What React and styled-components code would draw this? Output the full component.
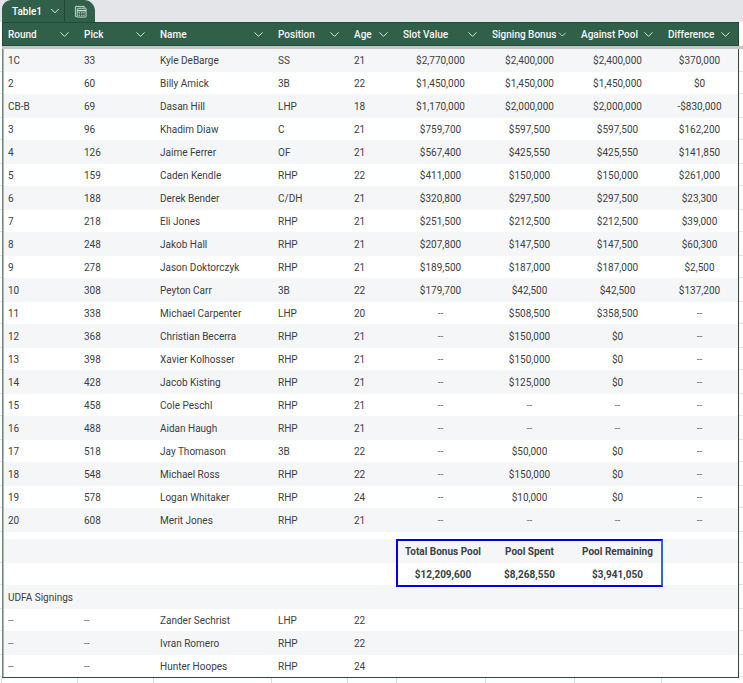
import React from "react";
import styled, { createGlobalStyle } from "styled-components";
import { ChevronDown } from "lucide-react";

const GlobalStyle = createGlobalStyle`
  html, body {
    margin: 0;
    padding: 0;
    background: #fff;
    font-family: Roboto, "Liberation Sans", sans-serif;
    -webkit-font-smoothing: antialiased;
  }
`;

const COLUMNS = "74px 76px 118px 76px 49px 89px 89px 87px 77px";

const Page = styled.div`
  width: 743px;
  height: 683px;
  overflow: hidden;
  background: #fff;
`;

const TabBar = styled.div`
  height: 22px;
  padding-left: 2px;
  background: #e4e5e9;
  display: flex;
  align-items: flex-end;
`;

const Tab = styled.div`
  width: 93px;
  height: 22px;
  background: #305f4a;
  border-radius: 9px 11px 0 0;
  display: flex;
  color: #fff;
`;

const TabName = styled.div`
  width: 63px;
  padding-left: 10px;
  box-sizing: border-box;
  display: flex;
  align-items: center;
  gap: 6px;
  font-size: 10px;
  font-weight: 500;
  border-right: 1px solid #1f4a38;
`;

const TabIcon = styled.div`
  flex: 1;
  display: flex;
  align-items: center;
  justify-content: center;
`;

const HeaderRow = styled.div`
  margin-left: 2px;
  width: 737px;
  height: 24px;
  box-sizing: border-box;
  display: grid;
  grid-template-columns: ${COLUMNS};
  background: #305f4a;
  border: 1px solid #214c3a;
  color: #f4f7f5;
`;

const HeaderCell = styled.div`
  display: flex;
  align-items: center;
  justify-content: space-between;
  padding: 0 5px 0 7px;
  font-size: 10px;
  font-weight: 500;
  white-space: nowrap;

  &:first-child {
    padding-left: 5px;
  }
`;

const GrayBand = styled.div`
  height: 3px;
  margin-left: 2px;
  background: #c5c6c6;
`;

const RowOuter = styled.div`
  padding: 0 4px 0 2px;
  background: linear-gradient(#dfe1e4, #dfe1e4) bottom / 100% 1px no-repeat;
`;

const RowInner = styled.div`
  height: ${(p) => p.$height}px;
  display: grid;
  grid-template-columns: ${COLUMNS};
  background: ${(p) => (p.$shaded ? "#f5f6f8" : "#fff")};
  border-left: 1px solid #6f8b7e;
  border-right: 1px solid #2c4a3f;
  box-shadow: inset 1px 0 0 #a9b8b1;
  color: #3c4043;
  font-size: 10px;
`;

const Cell = styled.div`
  display: flex;
  align-items: center;
  white-space: nowrap;
  justify-content: ${(p) => (p.$center ? "center" : "flex-start")};
  padding-left: ${(p) => p.$inset}px;
  font-weight: ${(p) => (p.$bold ? 700 : 400)};
  color: ${(p) => (p.$muted ? "#6b6f73" : "inherit")};
`;

const Spacer = styled.div`
  height: 7px;
  margin-left: 2px;
  width: 737px;
  box-sizing: border-box;
  background: #fff;
  border-left: 1px solid #6f8b7e;
  border-right: 1px solid #2c4a3f;
  box-shadow: inset 1px 0 0 #a9b8b1;
`;

const SummaryBlock = styled.div`
  position: relative;
`;

const SelectionBox = styled.div`
  position: absolute;
  left: 396px;
  top: 0;
  width: 267px;
  height: 48px;
  box-sizing: border-box;
  border: 2px solid #0000ee;
  border-right-color: #2f62f5;
  pointer-events: none;
`;

const BottomEdge = styled.div`
  margin-left: 2px;
  width: 737px;
  height: 1px;
  background: #2c4a3f;
`;

const Footer = styled.div`
  margin-left: 3px;
  height: 5px;
  display: grid;
  grid-template-columns: ${COLUMNS};
`;

const FooterCell = styled.div`
  position: relative;
  border-left: 1px solid #d9dbde;

  &:first-child {
    border-left: none;
  }

  &:first-child::before {
    content: "";
    position: absolute;
    left: -2px;
    top: 0;
    bottom: 0;
    width: 1px;
    background: #d9dbde;
  }
`;

const headers = [
  "Round",
  "Pick",
  "Name",
  "Position",
  "Age",
  "Slot Value",
  "Signing Bonus",
  "Against Pool",
  "Difference",
];

const rows = [
  ["1C", "33", "Kyle DeBarge", "SS", "21", "$2,770,000", "$2,400,000", "$2,400,000", "$370,000"],
  ["2", "60", "Billy Amick", "3B", "22", "$1,450,000", "$1,450,000", "$1,450,000", "$0"],
  ["CB-B", "69", "Dasan Hill", "LHP", "18", "$1,170,000", "$2,000,000", "$2,000,000", "-$830,000"],
  ["3", "96", "Khadim Diaw", "C", "21", "$759,700", "$597,500", "$597,500", "$162,200"],
  ["4", "126", "Jaime Ferrer", "OF", "21", "$567,400", "$425,550", "$425,550", "$141,850"],
  ["5", "159", "Caden Kendle", "RHP", "22", "$411,000", "$150,000", "$150,000", "$261,000"],
  ["6", "188", "Derek Bender", "C/DH", "21", "$320,800", "$297,500", "$297,500", "$23,300"],
  ["7", "218", "Eli Jones", "RHP", "21", "$251,500", "$212,500", "$212,500", "$39,000"],
  ["8", "248", "Jakob Hall", "RHP", "21", "$207,800", "$147,500", "$147,500", "$60,300"],
  ["9", "278", "Jason Doktorczyk", "RHP", "21", "$189,500", "$187,000", "$187,000", "$2,500"],
  ["10", "308", "Peyton Carr", "3B", "22", "$179,700", "$42,500", "$42,500", "$137,200"],
  ["11", "338", "Michael Carpenter", "LHP", "20", "--", "$508,500", "$358,500", "--"],
  ["12", "368", "Christian Becerra", "RHP", "21", "--", "$150,000", "$0", "--"],
  ["13", "398", "Xavier Kolhosser", "RHP", "21", "--", "$150,000", "$0", "--"],
  ["14", "428", "Jacob Kisting", "RHP", "21", "--", "$125,000", "$0", "--"],
  ["15", "458", "Cole Peschl", "RHP", "21", "--", "--", "--", "--"],
  ["16", "488", "Aidan Haugh", "RHP", "21", "--", "--", "--", "--"],
  ["17", "518", "Jay Thomason", "3B", "22", "--", "$50,000", "$0", "--"],
  ["18", "548", "Michael Ross", "RHP", "22", "--", "$150,000", "$0", "--"],
  ["19", "578", "Logan Whitaker", "RHP", "24", "--", "$10,000", "$0", "--"],
  ["20", "608", "Merit Jones", "RHP", "21", "--", "--", "--", "--"],
];

const udfa = [
  ["--", "--", "Zander Sechrist", "LHP", "22"],
  ["--", "--", "Ivran Romero", "RHP", "22"],
  ["--", "--", "Hunter Hoopes", "RHP", "24"],
];

function TableSheetIcon() {
  return (
    <svg width="13" height="13" viewBox="0 0 14 14" fill="none" stroke="#cfdcd5" strokeWidth="1">
      <path d="M3 12.5H1.5V1.5H11V3" />
      <rect x="3.5" y="3.5" width="9.5" height="9.5" rx="0.5" />
      <path d="M3.5 6h9.5" strokeWidth="1.6" />
      <path d="M5 8.5h1.5M7.5 8.5h1.5M10 8.5h1.5M5 11h1.5M7.5 11h1.5M10 11h1.5" strokeWidth="1.2" />
    </svg>
  );
}

function cellInset(i, center, bold) {
  if (center) return bold && i === 5 ? 5 : 0;
  return i === 0 ? 5 : 7;
}

function Row({ shaded, height, values, bold }) {
  return (
    <RowOuter>
      <RowInner $shaded={shaded} $height={height}>
        {values.map((v, i) => (
          <Cell
            key={i}
            $center={i > 4}
            $inset={cellInset(i, i > 4, bold)}
            $bold={bold}
            $muted={v === "--"}
          >
            {v}
          </Cell>
        ))}
      </RowInner>
    </RowOuter>
  );
}

export default function App() {
  return (
    <Page>
      <GlobalStyle />
      <TabBar>
        <Tab>
          <TabName>
            Table1
            <ChevronDown size={14} strokeWidth={1.5} />
          </TabName>
          <TabIcon>
            <TableSheetIcon />
          </TabIcon>
        </Tab>
      </TabBar>
      <HeaderRow>
        {headers.map((h) => (
          <HeaderCell key={h}>
            {h}
            <ChevronDown size={15} strokeWidth={1.4} />
          </HeaderCell>
        ))}
      </HeaderRow>
      <GrayBand />
      {rows.map((r, i) => (
        <Row
          key={r[1]}
          values={r}
          shaded={i % 2 === 0}
          height={i === 0 ? 23 : i % 2 === 0 ? 24 : 22}
        />
      ))}
      <Spacer />
      <SummaryBlock>
        <Row
          shaded
          height={24}
          bold
          values={["", "", "", "", "", "Total Bonus Pool", "Pool Spent", "Pool Remaining", ""]}
        />
        <Row
          height={22}
          bold
          values={["", "", "", "", "", "$12,209,600", "$8,268,550", "$3,941,050", ""]}
        />
        <SelectionBox />
      </SummaryBlock>
      <Row shaded height={24} values={["UDFA Signings", "", "", "", "", "", "", "", ""]} />
      {udfa.map((r, i) => (
        <Row
          key={r[2]}
          values={[...r, "", "", "", ""]}
          shaded={i % 2 === 1}
          height={i % 2 === 1 ? 24 : 22}
        />
      ))}
      <BottomEdge />
      <Footer>
        {headers.map((h) => (
          <FooterCell key={h} />
        ))}
      </Footer>
    </Page>
  );
}
